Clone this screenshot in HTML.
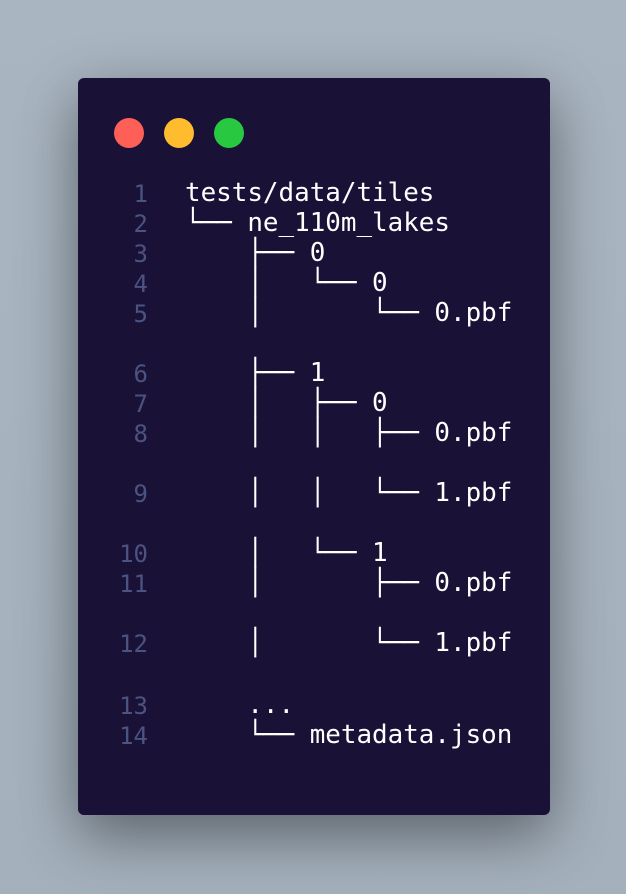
<!DOCTYPE html>
<html><head><style>
html,body{margin:0;padding:0}
body{width:626px;height:894px;background:linear-gradient(180deg,#a9b5c1,#a4b0bc);position:relative;overflow:hidden}
.card{position:absolute;left:78px;top:78px;width:472px;height:737px;background:#1a1136;border-radius:6px;box-shadow:0 20px 60px rgba(0,0,0,.45)}
.dot{position:absolute;top:118px;width:30px;height:30px;border-radius:50%}
.r{position:absolute;left:0;height:30px;line-height:30px;font-family:"DejaVu Sans Mono","Liberation Mono",monospace;font-size:25.9px;white-space:pre;color:#fff}
.n{position:absolute;left:100px;width:48px;text-align:right;height:30px;line-height:30px;font-family:"DejaVu Sans Mono","Liberation Mono",monospace;font-size:24px;color:#4b5382;margin-top:2px}
.t{position:absolute;left:185px;margin-top:1px}
</style></head><body>
<div class="card"></div>
<div class="dot" style="left:114px;background:#fe5f57"></div>
<div class="dot" style="left:164px;background:#febc2e"></div>
<div class="dot" style="left:214px;background:#28c840"></div>

<div class="n" style="top:177px">1</div><div class="r t" style="top:177px">tests/data/tiles</div>
<div class="n" style="top:207px">2</div><div class="r t" style="top:207px">└── ne_110m_lakes</div>
<div class="n" style="top:237px">3</div><div class="r t" style="top:237px">    ├── 0</div>
<div class="n" style="top:267px">4</div><div class="r t" style="top:267px">    │   └── 0</div>
<div class="n" style="top:297px">5</div><div class="r t" style="top:297px">    │       └── 0.pbf</div>
<div class="n" style="top:357px">6</div><div class="r t" style="top:357px">    ├── 1</div>
<div class="n" style="top:387px">7</div><div class="r t" style="top:387px">    │   ├── 0</div>
<div class="n" style="top:417px">8</div><div class="r t" style="top:417px">    │   │   ├── 0.pbf</div>
<div class="n" style="top:477px">9</div><div class="r t" style="top:477px">    │   │   └── 1.pbf</div>
<div class="n" style="top:537px">10</div><div class="r t" style="top:537px">    │   └── 1</div>
<div class="n" style="top:567px">11</div><div class="r t" style="top:567px">    │       ├── 0.pbf</div>
<div class="n" style="top:627px">12</div><div class="r t" style="top:627px">    │       └── 1.pbf</div>
<div class="n" style="top:689px">13</div><div class="r t" style="top:689px">    ...</div>
<div class="n" style="top:719px">14</div><div class="r t" style="top:719px">    └── metadata.json</div>
</body></html>
